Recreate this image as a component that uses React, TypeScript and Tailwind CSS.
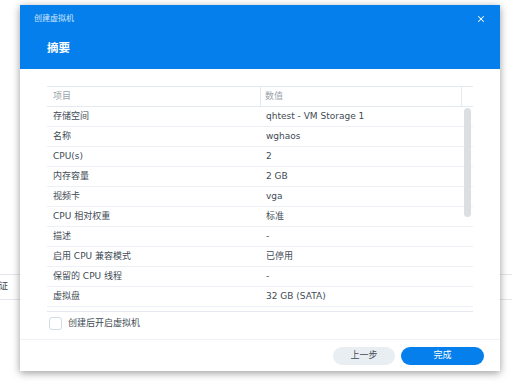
import { X } from "lucide-react";

const rows: [string, string][] = [
  ["存储空间", "qhtest - VM Storage 1"],
  ["名称", "wghaos"],
  ["CPU(s)", "2"],
  ["内存容量", "2 GB"],
  ["视频卡", "vga"],
  ["CPU 相对权重", "标准"],
  ["描述", "-"],
  ["启用 CPU 兼容模式", "已停用"],
  ["保留的 CPU 线程", "-"],
  ["虚拟盘", "32 GB (SATA)"],
];

const font = "font-['DejaVu_Sans','Noto_Sans_CJK_SC',sans-serif]";

export default function App() {
  return (
    <div className={`relative w-[512px] h-[384px] overflow-hidden bg-white ${font}`}>
      {/* page behind the dialog */}
      <div className="pt-[274px]">
        <div className="h-[26px] border-y border-[#e3e8ee] flex items-center">
          <span className="-ml-[1px] text-[9px] text-[#414b55]">证</span>
        </div>
      </div>

      {/* Dialog */}
      <div className="absolute left-[20px] top-[5px] w-[480px] h-[366px] bg-white flex flex-col shadow-[0_2px_8px_rgba(0,0,0,0.4)]">
        <div className="h-[64px] bg-[#057feb] shrink-0 flex flex-col">
          <div className="h-[27px] flex items-center pl-[14px] pr-[14px]">
            <span className="text-[8px] text-[#cfe5fb] leading-none">创建虚拟机</span>
            <X size={10} strokeWidth={2.5} className="ml-auto text-white" />
          </div>
          <div className="pl-[27px] pt-[11px] text-[11.5px] font-bold text-white leading-none">摘要</div>
        </div>

        <div className="flex-1 px-[27px] pt-[17px] flex flex-col">
          {/* table */}
          <div className="border-t border-[#e3e9ef] text-[9px]">
            <div className="h-[20px] flex border-b border-[#e3e9ef] text-[#9aa3ab]">
              <div className="w-[214px] pl-[6px] flex items-center border-r border-[#e3e9ef]">项目</div>
              <div className="w-[201px] pl-[4px] flex items-center border-r border-[#e3e9ef]">数值</div>
            </div>
            <div className="relative h-[205px] overflow-hidden border-b border-[#e3e9ef]">
              {rows.map(([k, v]) => (
                <div key={k} className="h-[20px] flex border-b border-[#edf1f5] text-[#414b55]">
                  <div className="w-[214px] pl-[6px] flex items-center">{k}</div>
                  <div className="pl-[5px] flex items-center">{v}</div>
                </div>
              ))}
              <div className="absolute left-[417px] top-[1px] w-[7px] h-[109px] rounded-full bg-[#dcdfe2]" />
            </div>
          </div>

          <div className="mt-[5px] flex items-center gap-[6px] pl-[2px]">
            <div className="w-[13px] h-[13px] rounded-[3px] border border-[#d3dbe3] bg-white" />
            <span className="text-[9px] text-[#414b55]">创建后开启虚拟机</span>
          </div>
        </div>

        <div className="h-[32px] shrink-0 border-t border-[#eef2f6] flex items-center justify-end gap-[6px] pr-[16px]">
          <button className="w-[62px] h-[18px] rounded-full bg-[#e9eef3] text-[9px] text-[#414b55]">上一步</button>
          <button className="w-[83px] h-[18px] rounded-full bg-[#057feb] text-[9px] text-white">完成</button>
        </div>
      </div>
    </div>
  );
}
